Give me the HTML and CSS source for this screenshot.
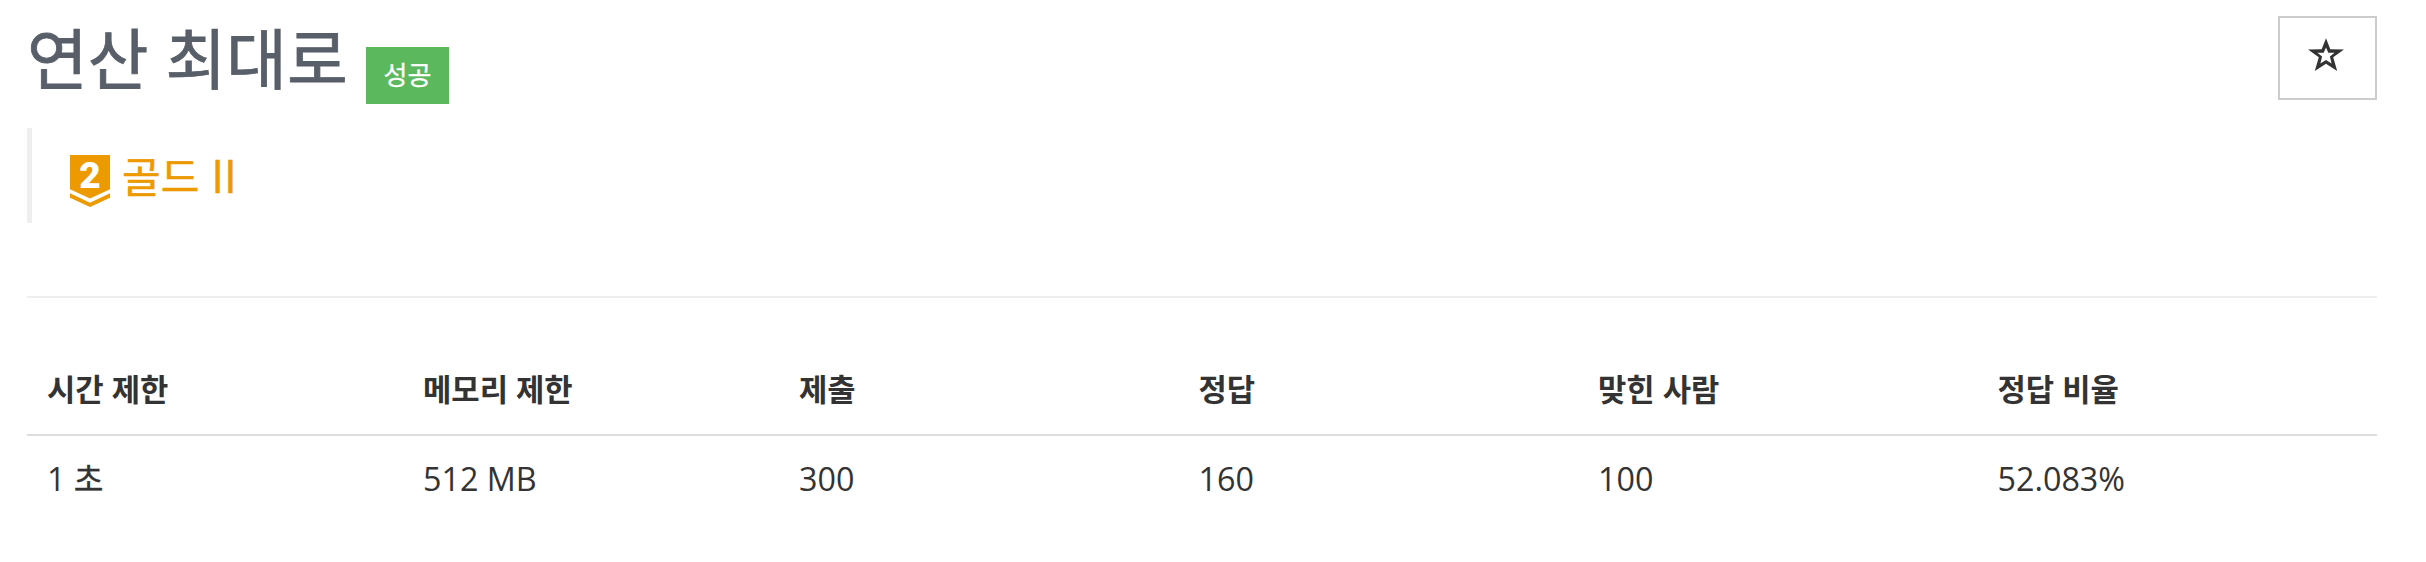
FILE: index.html
```html
<!DOCTYPE html>
<html lang="ko"><head><meta charset="utf-8"><title>연산 최대로</title><link rel="stylesheet" href="styles.css"></head>
<body>
<header class="head"><h1 class="title">연산 최대로</h1><span class="label">성공</span>
<button class="star" aria-label="즐겨찾기"><svg width="36" height="34" viewBox="0 0 36 34"><path fill="#333" fill-rule="evenodd" d="M18 .3 22.3 11.3 36 11.4 25.2 19.2 29.2 33 18 25.7 6.8 33 10.8 19.2 0 11.4 13.7 11.3ZM18 9.6 15.7 14.7 9.4 14.7 14.1 18.5 12.4 25.6 18 22 23.6 25.6 21.9 18.5 26.6 14.7 20.3 14.7Z"/></svg></button></header>
<blockquote class="tier"><svg class="badge" width="40" height="52" viewBox="0 0 40 52"><path d="M0 0H40V34.2L20 43.6 0 34.2Z" fill="#ec9a00"/><path d="M0 38.3 20 47.8 40 38.3V42.7L20 52 0 42.7Z" fill="#ec9a00"/><text x="20" y="33" text-anchor="middle" class="num">2</text></svg><span class="tiername">골드 <span class="grade">II</span></span></blockquote>
<hr class="rule">
<table class="info"><colgroup><col class="a"><col class="a"><col class="b"><col class="b"><col class="b"><col class="c"></colgroup>
<thead><tr><th>시간 제한</th><th>메모리 제한</th><th>제출</th><th>정답</th><th>맞힌 사람</th><th>정답 비율</th></tr></thead>
<tbody><tr><td>1 <span class="unit">초</span></td><td>512 MB</td><td>300</td><td>160</td><td>100</td><td>52.083%</td></tr></tbody></table>
</body></html>
```
FILE: styles.css
```css
*{box-sizing:border-box}
body{margin:0;padding:16px 49px 0 27px;background:#fff;color:#333;font-family:"Open Sans","Noto Sans CJK KR",sans-serif;font-size:32.3px}
.head{display:flex;align-items:flex-start;height:112px}
.title{margin:0;width:319px;font-size:66px;line-height:84px;font-weight:400;color:#585f69;white-space:nowrap;-webkit-text-stroke:.8px #585f69}
.label{margin:31px 0 0 20px;width:83px;height:57px;background:#5cb85c;color:#fff;font-size:26px;line-height:57px;text-align:center;-webkit-text-stroke:.3px #fff}
.star{margin-left:auto;width:99px;height:84px;border:2px solid #ccc;background:#fff;padding:0 3px 6px 0;display:flex;align-items:center;justify-content:center}
.tier{margin:0;height:95px;border-left:5px solid #eee;padding:27px 0 0 38px;display:flex;align-items:flex-start;color:#ec9a00}
.tiername{font-size:42px;line-height:40px;margin-left:12px;white-space:nowrap;-webkit-text-stroke:.5px #ec9a00}
.grade{font-size:46px;line-height:40px;margin-left:1px}
.num{font:900 37px Roboto,sans-serif;fill:#fff}
.rule{margin:73px 0 52px;border:0;height:2px;background:#eee}
.info{width:100%;table-layout:fixed;border-collapse:separate;border-spacing:0}
.a{width:376px}.b{width:399.5px}
th,td{padding:0 20px;text-align:left;white-space:nowrap;line-height:44px}
th{height:86px;border-bottom:2px solid #ddd;font-size:30.8px;padding-bottom:6px}
td{height:86px;padding-bottom:3px}
.unit{-webkit-text-stroke:.3px #333}
```
